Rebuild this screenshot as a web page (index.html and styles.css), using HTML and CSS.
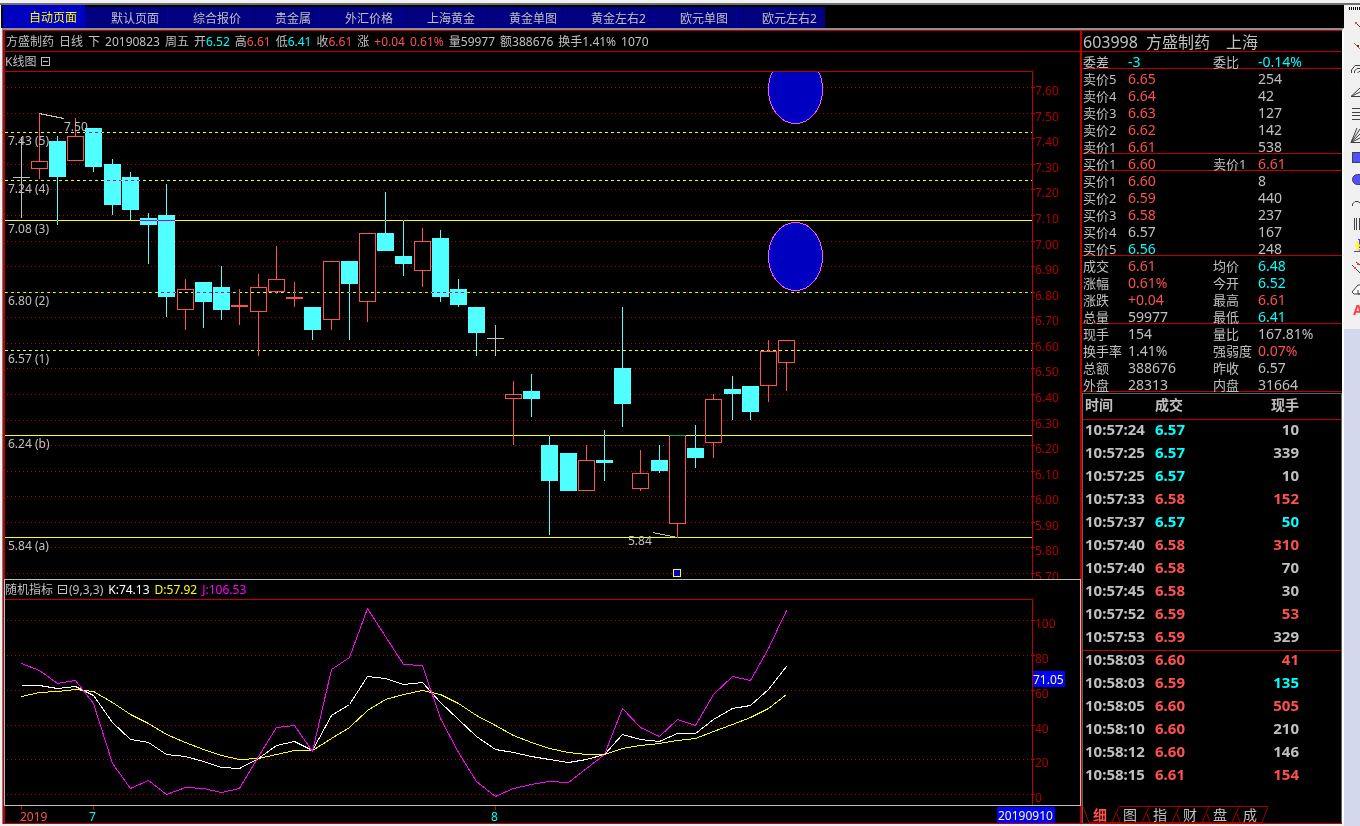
FILE: index.html
```html
<!DOCTYPE html>
<html lang="zh-CN">
<head>
  <meta charset="UTF-8">
  <meta name="viewport" content="width=device-width, initial-scale=1.0">
  <title>方盛制药 603998</title>
  <link rel="stylesheet" href="styles.css">
</head>
<body>
  <div class="terminal">
    <nav class="tabs">
      <button class="tab active">自动页面</button>
      <button class="tab">默认页面</button>
      <button class="tab">综合报价</button>
      <button class="tab">贵金属</button>
      <button class="tab">外汇价格</button>
      <button class="tab">上海黄金</button>
      <button class="tab">黄金单图</button>
      <button class="tab">黄金左右2</button>
      <button class="tab">欧元单图</button>
      <button class="tab">欧元左右2</button>
    </nav>

    <main class="board">
      <div class="frame">
        <section class="charts">
          <div class="info">
            <span>方盛制药</span>
            <span>日线</span>
            <span>下</span>
            <span>20190823</span>
            <span>周五</span>
            <span>开<b class="down">6.52</b></span>
            <span>高<b class="up">6.61</b></span>
            <span>低<b class="down">6.41</b></span>
            <span>收<b class="up">6.61</b></span>
            <span>涨</span>
            <span class="up">+0.04</span>
            <span class="up">0.61%</span>
            <span>量59977</span>
            <span>额388676</span>
            <span>换手1.41%</span>
            <span>1070</span>
          </div>

          <div class="chart-title">
            <span>K线图</span>
            <button class="fold" aria-label="折叠K线图"></button>
          </div>
          <svg class="chart" id="price" viewBox="5 71 1075 508"></svg>

          <div class="indicator">
            <div class="chart-title">
              <span>随机指标</span>
              <button class="fold" aria-label="折叠随机指标"></button>
              <span class="params">(9,3,3)</span>
              <span class="k">K:74.13</span>
              <span class="d">D:57.92</span>
              <span class="j">J:106.53</span>
            </div>
            <svg class="chart" id="kdj" viewBox="5 599 1075 206"></svg>
          </div>

          <svg class="chart" id="dates" viewBox="5 806 1075 17">
            <rect class="axis" x="21" y="806" width="1" height="4"/>
            <rect class="axis" x="93" y="806" width="1" height="4"/>
            <rect class="axis" x="495" y="806" width="1" height="4"/>
            <text class="year" x="20" y="821">2019</text>
            <text class="month" x="89" y="821">7</text>
            <text class="month" x="491" y="821">8</text>
            <rect class="tag" x="997" y="807" width="58" height="16"/>
            <text class="tag-text" x="998" y="820">20190910</text>
          </svg>
        </section>

        <aside class="side">
          <h1 class="stock"><span>603998</span><span>方盛制药</span><span class="market">上海</span></h1>

          <table class="quote">
            <tbody>
              <tr class="line"><th>委差</th><td class="down">-3</td><th>委比</th><td class="down">-0.14%</td></tr>
              <tr><th>卖价5</th><td class="up">6.65</td><th></th><td>254</td></tr>
              <tr><th>卖价4</th><td class="up">6.64</td><th></th><td>42</td></tr>
              <tr><th>卖价3</th><td class="up">6.63</td><th></th><td>127</td></tr>
              <tr><th>卖价2</th><td class="up">6.62</td><th></th><td>142</td></tr>
              <tr class="line"><th>卖价1</th><td class="up">6.61</td><th></th><td>538</td></tr>
              <tr class="line"><th>买价1</th><td class="up">6.60</td><th>卖价1</th><td class="up">6.61</td></tr>
              <tr><th>买价1</th><td class="up">6.60</td><th></th><td>8</td></tr>
              <tr><th>买价2</th><td class="up">6.59</td><th></th><td>440</td></tr>
              <tr><th>买价3</th><td class="up">6.58</td><th></th><td>237</td></tr>
              <tr><th>买价4</th><td>6.57</td><th></th><td>167</td></tr>
              <tr class="line"><th>买价5</th><td class="down">6.56</td><th></th><td>248</td></tr>
              <tr><th>成交</th><td class="up">6.61</td><th>均价</th><td class="down">6.48</td></tr>
              <tr><th>涨幅</th><td class="up">0.61%</td><th>今开</th><td class="down">6.52</td></tr>
              <tr><th>涨跌</th><td class="up">+0.04</td><th>最高</th><td class="up">6.61</td></tr>
              <tr class="line"><th>总量</th><td>59977</td><th>最低</th><td class="down">6.41</td></tr>
              <tr><th>现手</th><td>154</td><th>量比</th><td>167.81%</td></tr>
              <tr><th>换手率</th><td>1.41%</td><th>强弱度</th><td class="up">0.07%</td></tr>
              <tr><th>总额</th><td>388676</td><th>昨收</th><td>6.57</td></tr>
              <tr class="line"><th>外盘</th><td>28313</td><th>内盘</th><td>31664</td></tr>
            </tbody>
          </table>

          <div class="ticks">
            <table class="deals">
              <thead>
                <tr><th>时间</th><th>成交</th><th>现手</th></tr>
              </thead>
              <tbody>
                <tr><td>10:57:24</td><td class="down">6.57</td><td>10</td></tr>
                <tr><td>10:57:25</td><td class="down">6.57</td><td>339</td></tr>
                <tr><td>10:57:25</td><td class="down">6.57</td><td>10</td></tr>
                <tr><td>10:57:33</td><td class="up">6.58</td><td class="up">152</td></tr>
                <tr><td>10:57:37</td><td class="down">6.57</td><td class="down">50</td></tr>
                <tr><td>10:57:40</td><td class="up">6.58</td><td class="up">310</td></tr>
                <tr><td>10:57:40</td><td class="up">6.58</td><td>70</td></tr>
                <tr><td>10:57:45</td><td class="up">6.58</td><td>30</td></tr>
                <tr><td>10:57:52</td><td class="up">6.59</td><td class="up">53</td></tr>
                <tr><td>10:57:53</td><td class="up">6.59</td><td>329</td></tr>
                <tr class="minute"><td>10:58:03</td><td class="up">6.60</td><td class="up">41</td></tr>
                <tr><td>10:58:03</td><td class="up">6.59</td><td class="down">135</td></tr>
                <tr><td>10:58:05</td><td class="up">6.60</td><td class="up">505</td></tr>
                <tr><td>10:58:10</td><td class="up">6.60</td><td>210</td></tr>
                <tr><td>10:58:12</td><td class="up">6.60</td><td>146</td></tr>
                <tr><td>10:58:15</td><td class="up">6.61</td><td class="up">154</td></tr>
              </tbody>
            </table>

            <nav class="subtabs">
              <svg class="subtabs-bg" width="190" height="17" viewBox="0 0 190 17">
                <path d="M0 .5 L6 16.5 H29 L36 .5 H185 L179 16.5 H29 M34 8 L37 16 M66 .5 L59 16.5 M64 8 L67 16 M96 .5 L89 16.5 M94 8 L97 16 M126 .5 L119 16.5 M124 8 L127 16 M156 .5 L149 16.5 M154 8 L157 16"/>
              </svg>
              <button class="subtab active">细</button>
              <button class="subtab">图</button>
              <button class="subtab">指</button>
              <button class="subtab">财</button>
              <button class="subtab">盘</button>
              <button class="subtab">成</button>
            </nav>
          </div>
        </aside>
      </div>
    </main>
  </div>

  <div class="toolbox">
    <div class="tools">
      <div class="grip"></div>
      <button class="tool" aria-label="线段"><svg viewBox="0 0 16 22"><path d="M12 10 L16 14"/><rect class="r" x="11" y="9" width="2" height="2"/></svg></button>
      <button class="tool" aria-label="直线"><svg viewBox="0 0 16 22"><path class="rs" d="M10 8 L16 14"/><rect class="g" x="13" y="10" width="2" height="2"/></svg></button>
      <button class="tool" aria-label="圆弧"><svg viewBox="0 0 16 22"><path d="M7.500 16 V13 L11 8.500 H16 M10.500 16 V14 L13 11.500 H16 M13.500 16 L15 14.500 H16"/></svg></button>
      <button class="tool" aria-label="角度线"><svg viewBox="0 0 16 22"><path d="M7 17.500 L16 9 M7 17.500 L16 13 M7 17.500 H16"/></svg></button>
      <button class="tool" aria-label="水平线组"><svg viewBox="0 0 16 22"><path d="M8 7.500 H16 M8 11.500 H16 M8 14.500 H16 M8 18.500 H16"/></svg></button>
      <button class="tool" aria-label="扇形线"><svg viewBox="0 0 16 22"><path d="M7 19.500 L13 5 M7 19.500 L16 6 M7 19.500 L16 11 M7 19.500 L16 15 M7 19.500 H16"/></svg></button>
      <button class="tool" aria-label="矩形"><svg viewBox="0 0 16 22"><rect class="b" x="8.500" y="7.500" width="12" height="10"/></svg></button>
      <button class="tool" aria-label="椭圆"><svg viewBox="0 0 16 22"><rect class="b" x="8.500" y="7.500" width="16" height="10" rx="5"/></svg></button>
      <button class="tool" aria-label="弧线"><svg viewBox="0 0 16 22"><path d="M8.500 17 V15 L11 12.500 H14 L16 14"/></svg></button>
      <button class="tool" aria-label="垂直线组"><svg viewBox="0 0 16 22"><path d="M10.500 7 V19 M12.500 7 V19 M15.500 7 V19"/></svg></button>
      <button class="tool" aria-label="标注"><svg viewBox="0 0 16 22"><path class="bs" d="M14 6.500 H16 M15.500 7 V15 M10 18.500 H16 M14 17 H16"/><path class="ys" d="M13.500 8 V18 M11 12.500 H16 M12 16.500 H15"/></svg></button>
      <button class="tool" aria-label="平行线"><svg viewBox="0 0 16 22"><path d="M8 10 L16 18 M12 7 L16 10"/><rect class="r" x="10" y="12" width="2" height="2"/><rect class="r" x="13" y="8" width="2" height="2"/></svg></button>
      <button class="tool" aria-label="橡皮擦"><svg viewBox="0 0 16 22"><path class="w" d="M8 15 L14 8 H18 V17 H10 Z"/><path d="M14 13 V17 H16"/></svg></button>
      <button class="tool letter">A</button>
    </div>
  </div>

  <script src="chart.js"></script>
</body>
</html>
```
FILE: styles.css
```css
* {
  box-sizing: border-box;
}
body {
  margin: 0;
  min-height: 100vh;
  display: flex;
  align-items: stretch;
  border-top: 3px solid #f0f0f0;
  background: #f0f0f0;
  color: #c0c0c0;
  font-family: "Noto Sans", "Noto Sans CJK SC", sans-serif;
  font-size: 12px;
}
button {
  margin: 0;
  padding: 0;
  border: none;
  background: none;
  color: inherit;
  font-family: inherit;
  font-size: inherit;
  cursor: pointer;
}
.up {
  color: #ff5050;
}
.down {
  color: #00ffff;
}

/* Page tabs */
.terminal {
  flex: 1;
  min-width: 0;
  border-top: 2px solid #707070;
}
.tabs {
  display: flex;
  align-items: flex-end;
  height: 23px;
  margin-left: 1px;
  padding-left: 2px;
  background: #000;
}
.tab {
  height: 21px;
  padding: 2px 8px 0 25px;
  border-left: 1px solid #0000a0;
  background: #000080;
  line-height: 19px;
  white-space: nowrap;
}
.tab.active {
  height: 23px;
  border-color: #0000c0;
  background: #0000c0;
  color: #ffff00;
}

/* Main board */
.board {
  margin-left: 2px;
  border-top: 2px solid #909090;
  border-left: 1px solid #808080;
  border-right: 2px solid #fff;
}
.frame {
  display: grid;
  grid-template-columns: minmax(0, 1fr) 260px;
  border: 1px solid #c00000;
  border-left-width: 2px;
  border-right: none;
  background: #000;
}
.charts {
  border-right: 2px solid #c00000;
}
.info {
  display: flex;
  gap: 5px;
  height: 21px;
  padding-left: 1px;
  border-bottom: 1px solid #c00000;
  line-height: 21px;
  white-space: nowrap;
}
.info b {
  font-weight: normal;
}
.chart-title {
  display: flex;
  align-items: center;
  gap: 5px;
  height: 19px;
  line-height: 19px;
  white-space: nowrap;
}
.fold {
  width: 9px;
  height: 9px;
  border: 1px solid #c0c0c0;
  background: linear-gradient(#c0c0c0, #c0c0c0) center / 5px 1px no-repeat;
}
.indicator {
  margin: 0 -1px;
  border: 1px solid #c0c0c0;
}
.params {
  margin-left: -3px;
}
.k {
  color: #fff;
}
.d {
  color: #ffff00;
}
.j {
  color: #ff00ff;
}

/* Charts */
.chart {
  display: block;
  width: 100%;
  font-size: 12px;
  shape-rendering: crispEdges;
}
.chart text {
  fill: #c0c0c0;
}
.chart .scale {
  fill: #b00000;
}
.grid {
  stroke: #b80000;
  stroke-dasharray: 1 3;
}
.axis {
  fill: #c00000;
}
.body-up {
  fill: #000;
  stroke: #ff5050;
}
.wick-up {
  fill: #ff5050;
}
.fall {
  fill: #50ffff;
}
.flat {
  fill: #c0c0c0;
}
.level {
  stroke: #ffff00;
  mix-blend-mode: difference;
}
.level.dashed {
  stroke-dasharray: 3 3;
}
.pointer {
  stroke: #c0c0c0;
}
.bubble {
  fill: #0000c0;
  stroke: #ff50ff;
}
.marker {
  fill: #0000c0;
  stroke: #ffff00;
}
.curve {
  fill: none;
}
.curve-k {
  stroke: #fff;
}
.curve-d {
  stroke: #ffff00;
}
.curve-j {
  stroke: #ff00ff;
}
.tag {
  fill: #0000ff;
}
.chart .tag-text {
  fill: #ffff90;
}
.chart .year {
  fill: #ff5050;
}
.chart .month {
  fill: #00ffff;
}

/* Quote panel */
.side {
  display: flex;
  flex-direction: column;
  min-width: 0;
}
.stock {
  display: flex;
  gap: 8px;
  height: 21px;
  margin: 0;
  padding-left: 1px;
  border-bottom: 1px solid #c00000;
  font-size: 16px;
  font-weight: normal;
  line-height: 22px;
}
.market {
  margin-left: 8px;
}
.quote {
  width: 100%;
  table-layout: fixed;
  border-spacing: 0;
  font-size: 14px;
}
.quote th,
.quote td {
  height: 17px;
  padding: 3px 0 0;
  line-height: 14px;
  text-align: left;
  white-space: nowrap;
}
.quote th {
  width: 46px;
  padding-left: 1px;
  font-size: 13px;
  font-weight: normal;
}
.quote .line {
  box-shadow: inset 0 -1px #c00000;
}

/* Deals */
.ticks {
  display: flex;
  flex: 1;
  flex-direction: column;
  justify-content: space-between;
  margin-top: 1px;
  border: 1px solid #606060;
  border-bottom: none;
}
.deals {
  width: 100%;
  table-layout: fixed;
  border-spacing: 0;
  font-size: 15px;
  font-weight: bold;
}
.deals th,
.deals td {
  height: 23px;
  padding: 0 0 4px 2px;
  line-height: 19px;
  text-align: left;
}
.deals th {
  height: 26px;
  border-bottom: 1px solid #c00000;
  font-size: 14px;
}
.deals th:nth-child(-n+2) {
  width: 70px;
}
.deals th:last-child,
.deals td:last-child {
  padding-right: 42px;
  text-align: right;
}
.minute {
  box-shadow: inset 0 1px #c00000;
}
.subtabs {
  position: relative;
  display: flex;
  height: 17px;
  padding-left: 2px;
}
.subtabs-bg {
  position: absolute;
  top: 0;
  left: 0;
  fill: none;
  stroke: #a00000;
}
.subtab {
  position: relative;
  width: 30px;
  font-size: 14px;
  line-height: 16px;
}
.subtab.active {
  color: #ff5050;
  font-weight: bold;
}

/* Drawing tools */
.toolbox {
  width: 16px;
  border-top: 2px solid #707070;
  background: #d4d8ec;
  overflow: hidden;
}
.tools {
  padding-bottom: 8px;
  background: #f0f0f0;
}
.grip {
  height: 8px;
  background: repeating-linear-gradient(90deg, #000 0 1px, #f0f0f0 1px 2px) 5px 2px / 100% 3px no-repeat;
}
.tool {
  display: block;
  width: 16px;
  height: 22px;
  overflow: hidden;
}
.tool svg {
  display: block;
  width: 16px;
  height: 22px;
  fill: none;
  stroke: #404040;
}
.tool .r {
  fill: #ff4040;
  stroke: none;
}
.tool .g {
  fill: #404040;
  stroke: none;
}
.tool .b {
  fill: #5050ff;
}
.tool .w {
  fill: #fff;
}
.tool .rs {
  stroke: #ff4040;
}
.tool .bs {
  stroke: #4040ff;
}
.tool .ys {
  stroke: #ffff00;
  stroke-width: 2;
}
.tool.letter {
  padding-left: 9px;
  color: #ff4040;
  font-size: 14px;
  font-weight: bold;
  line-height: 22px;
  text-align: left;
}
```
FILE: chart.js
```js
const LEFT = 5;
const RIGHT = 1032;

// high, body top, body bottom, low, kind (u = up, d = down, f = flat)
const candles = [
  [137, 177, 178, 218, 'f'], [113, 161, 169, 179, 'u'], [136, 141, 177, 225, 'd'],
  [118, 136, 161, 161, 'u'], [128, 128, 167, 172, 'd'], [159, 164, 205, 215, 'd'],
  [172, 177, 210, 220, 'd'], [213, 218, 225, 264, 'd'], [184, 215, 297, 317, 'd'],
  [279, 289, 310, 330, 'u'], [282, 282, 302, 328, 'd'], [266, 287, 310, 320, 'd'],
  [289, 305, 307, 325, 'u'], [274, 287, 312, 356, 'u'], [246, 279, 292, 294, 'u'],
  [282, 297, 299, 307, 'u'], [307, 307, 330, 340, 'd'], [261, 261, 320, 330, 'u'],
  [261, 261, 284, 340, 'd'], [233, 233, 302, 322, 'u'], [192, 233, 251, 251, 'd'],
  [220, 256, 264, 276, 'd'], [228, 241, 271, 287, 'u'], [230, 238, 297, 302, 'd'],
  [279, 289, 305, 307, 'd'], [307, 307, 333, 356, 'd'], [325, 338, 339, 356, 'f'],
  [381, 394, 399, 445, 'u'], [374, 391, 399, 417, 'd'], [435, 445, 481, 535, 'd'],
  [453, 453, 491, 491, 'd'], [445, 460, 491, 491, 'u'], [430, 460, 463, 481, 'd'],
  [307, 368, 404, 427, 'd'], [450, 473, 489, 491, 'u'], [445, 460, 471, 473, 'd'],
  [435, 435, 524, 538, 'u'], [425, 448, 458, 468, 'd'], [394, 399, 443, 458, 'u'],
  [376, 389, 394, 420, 'd'], [386, 386, 412, 420, 'd'], [340, 351, 386, 402, 'u'],
  [340, 340, 363, 391, 'u']
];

const levels = [
  [132, '7.43 (5)', true], [180, '7.24 (4)', true], [220, '7.08 (3)', false],
  [292, '6.80 (2)', true], [350, '6.57 (1)', true], [435, '6.24 (b)', false],
  [537, '5.84 (a)', false]
];

const curves = {
  d: [696, 692, 691, 689, 691, 702, 714, 723, 734, 742, 749, 755, 759, 758, 754, 750, 750, 738, 727, 710, 699, 694, 690, 694, 703, 715, 725, 735, 742, 748, 752, 754, 754, 748, 745, 743, 740, 738, 731, 724, 717, 708, 694],
  k: [685, 685, 688, 686, 695, 722, 739, 742, 754, 756, 761, 767, 768, 758, 745, 741, 750, 715, 704, 676, 678, 684, 682, 702, 719, 736, 749, 752, 756, 759, 762, 759, 754, 734, 739, 741, 733, 733, 719, 708, 705, 689, 666],
  j: [663, 670, 683, 680, 703, 763, 788, 780, 794, 787, 788, 792, 788, 756, 727, 725, 751, 669, 657, 608, 636, 664, 665, 718, 752, 781, 796, 788, 784, 781, 782, 768, 754, 708, 727, 736, 719, 725, 694, 676, 680, 648, 610]
};

function barX(i) {
  return Math.floor(21.007 + 18.235 * i);
}

function rect(cls, x, y, w, h) {
  return `<rect class="${cls}" x="${x}" y="${y}" width="${w}" height="${h}"/>`;
}

function gridLine(y, label) {
  return `<line class="grid" x1="${LEFT + 2}" x2="${RIGHT}" y1="${y + 0.5}" y2="${y + 0.5}"/>` +
    rect('axis', RIGHT, y, 3, 1) +
    `<text class="scale" x="1035" y="${y + 8}">${label}</text>`;
}

function candle([high, top, bottom, low, kind], i) {
  const x = barX(i);
  if (kind === 'u') {
    return rect('wick-up', x, high, 1, low - high) +
      rect('body-up', x - 7.5, top + 0.5, 16, bottom - top - 1);
  }
  const cls = kind === 'd' ? 'fall' : 'flat';
  return rect(cls, x, high, 1, low - high) + rect(cls, x - 8, top, 17, bottom - top);
}

function drawPrice() {
  let out = '';
  for (let i = 0; i < 20; i++) {
    out += gridLine(Math.round(87.2 + i * 25.57), (7.6 - i / 10).toFixed(2));
  }
  out += '<ellipse class="bubble" cx="795.5" cy="89.5" rx="27" ry="34"/>';
  out += '<ellipse class="bubble" cx="795.5" cy="256.5" rx="27" ry="34"/>';
  out += rect('axis', LEFT, 71, RIGHT - LEFT, 1) + rect('axis', RIGHT, 71, 1, 508);
  out += candles.map(candle).join('');
  levels.forEach(([y, label, dashed]) => {
    out += `<line class="level ${dashed ? 'dashed' : ''}" x1="${LEFT}" x2="${RIGHT}" y1="${y + 0.5}" y2="${y + 0.5}"/>`;
    out += `<text x="8" y="${y + 13}">${label}</text>`;
  });
  // Highest and lowest price
  out += '<line class="pointer" x1="39" y1="113.5" x2="64" y2="118.5"/><text x="64" y="131">7.50</text>';
  out += '<line class="pointer" x1="653" y1="532.5" x2="677" y2="537.5"/><text x="628" y="545">5.84</text>';
  out += rect('marker', 673.5, 569.5, 7, 7);
  document.getElementById('price').innerHTML = out;
}

function drawKdj() {
  let out = '';
  [620, 655, 690, 725, 759, 794].forEach((y, i) => {
    out += gridLine(y, 100 - i * 20);
  });
  out += rect('axis', LEFT, 599, RIGHT - LEFT, 1) + rect('axis', RIGHT, 599, 1, 206);
  for (const name in curves) {
    const points = curves[name].map((y, i) => `${barX(i) + 0.5},${y + 0.5}`).join(' ');
    out += `<polyline class="curve curve-${name}" points="${points}"/>`;
  }
  out += rect('tag', 1033, 671, 32, 16) + '<text class="tag-text" x="1033" y="684">71.05</text>';
  document.getElementById('kdj').innerHTML = out;
}

drawPrice();
drawKdj();
```
